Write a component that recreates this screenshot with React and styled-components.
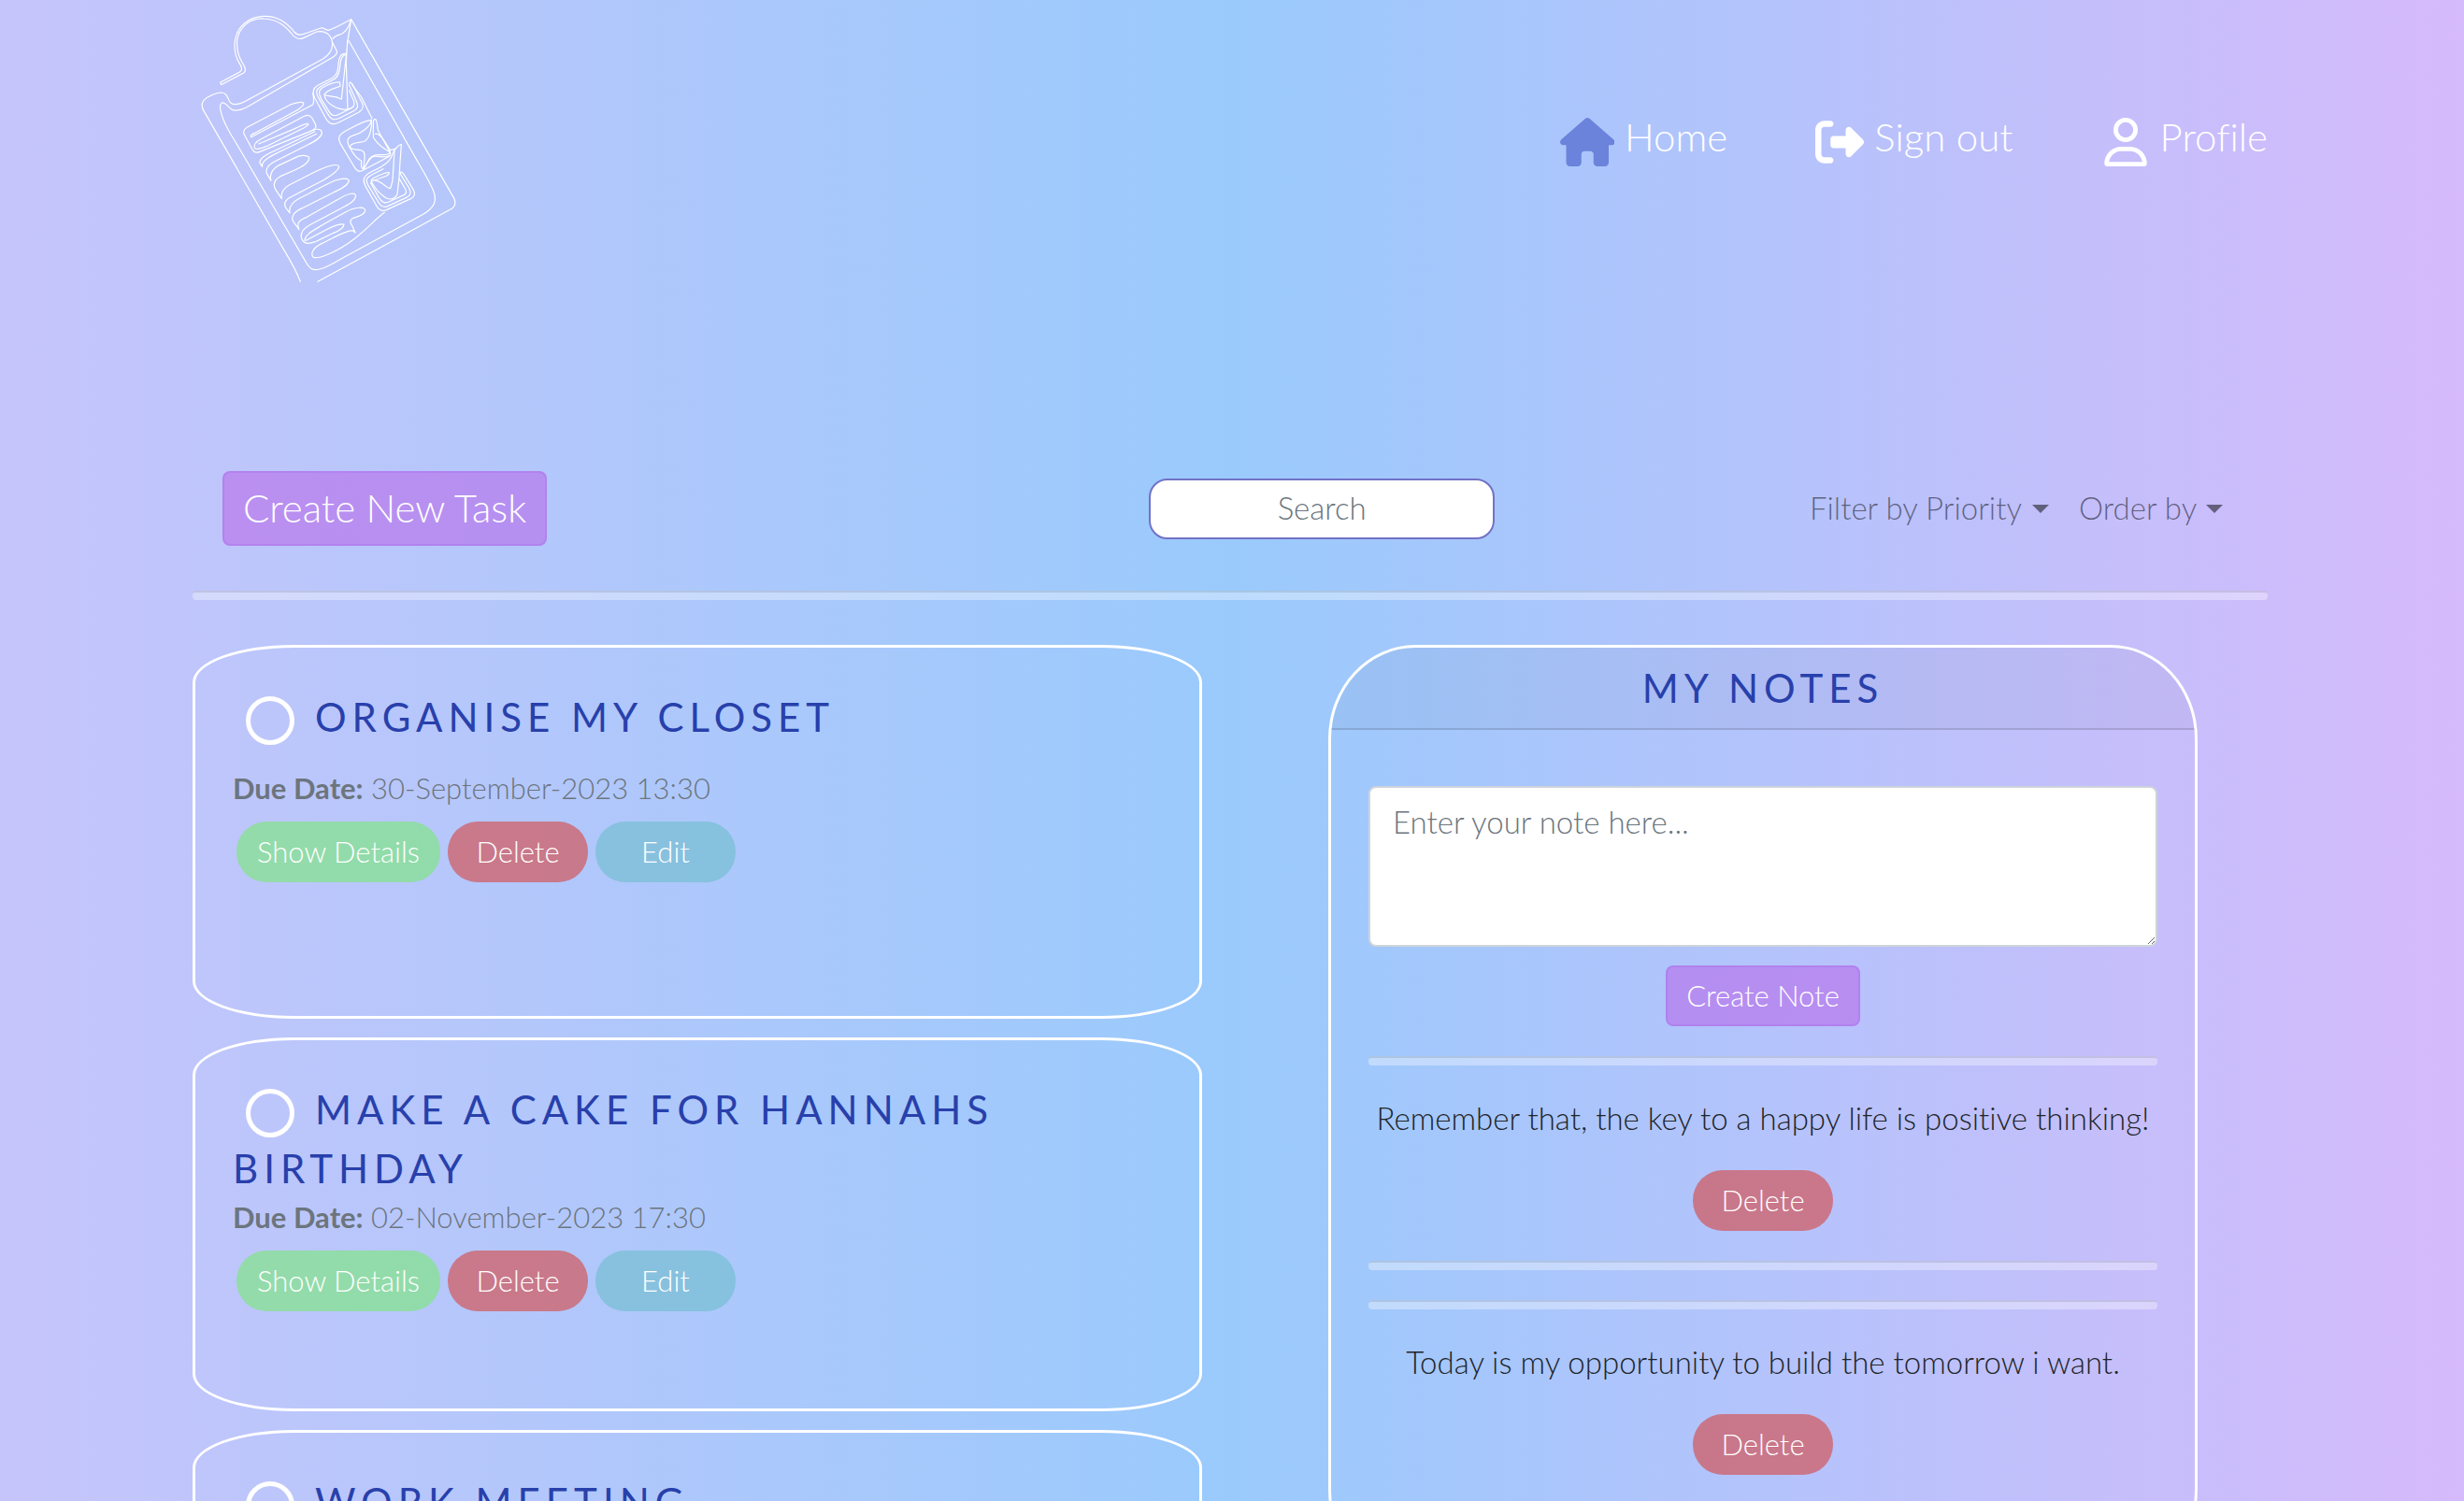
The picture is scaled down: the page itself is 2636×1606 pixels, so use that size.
import React from "react";
import styled, { createGlobalStyle } from "styled-components";
import { FaRightFromBracket, FaRegUser } from "react-icons/fa6";

const GlobalStyle = createGlobalStyle`
  *, *::before, *::after { box-sizing: border-box; }
  html { scrollbar-width: none; }
  body {
    margin: 0;
    padding: 0 4px 0 0;
    min-height: 100vh;
    background: linear-gradient(90deg, #c6c5fb 0%, #9acafc 50%, #d6bafb 100%);
    color: #212529;
    font-family: Lato, "Open Sans", sans-serif;
    font-weight: 300;
    font-size: 33px;
    font-variant-ligatures: none;
  }
  button, input, textarea, select { font: inherit; }
`;

const Page = styled.div`
  max-width: 2220px;
  margin: 0 auto;
`;

const Header = styled.header`
  display: flex;
  justify-content: space-between;
  align-items: flex-start;
  min-height: 504px;
`;

const Logo = styled.svg`
  width: 300px;
  height: 302px;
  fill: none;
  stroke: #fff;
  stroke-width: 3.6;
  stroke-linecap: round;
  stroke-linejoin: round;
`;

const Nav = styled.nav`
  display: flex;
  gap: 94px;
  padding-top: 114px;
`;

const NavLink = styled.a`
  display: flex;
  align-items: center;
  gap: 11px;
  color: #fff;
  font-size: 42px;
  line-height: 48px;
  text-decoration: none;

  svg {
    height: 52px;
    width: auto;
    margin-top: 12px;
    color: ${(p) => (p.$active ? "#6b83db" : "#fff")};
  }
`;

const Toolbar = styled.div`
  display: grid;
  grid-template-columns: 14fr 370px 11fr;
  align-items: center;
  padding: 0 48px 0 32px;
`;

const PurpleButton = styled.button`
  justify-self: start;
  height: ${(p) => (p.$large ? 80 : 65)}px;
  padding: 0 20px 2px;
  border: 2px solid rgba(165, 100, 236, 0.3);
  border-radius: 8px;
  background: rgba(183, 106, 233, 0.6);
  color: #fff;
  font-size: ${(p) => (p.$large ? 42 : 31)}px;
`;

const SearchInput = styled.input`
  width: 100%;
  height: 65px;
  padding: 0 20px 2px;
  border: 2px solid #7272c6;
  border-radius: 20px;
  background: #fff;
  text-align: center;

  &::placeholder { color: #6c757d; opacity: 1; }
`;

const Filters = styled.div`
  display: flex;
  justify-content: flex-end;
  gap: 32px;
`;

const SelectWrap = styled.label`
  display: flex;
  align-items: center;
  gap: 9px;
  color: rgba(0, 0, 0, 0.5);

  &::after {
    content: "";
    border: 9px solid transparent;
    border-top-color: currentColor;
    border-bottom: 0;
  }
`;

const Select = styled.select`
  appearance: none;
  border: 0;
  padding: 0 0 2px;
  background: none;
  color: inherit;
`;

const Rule = styled.hr`
  width: 100%;
  height: 10px;
  margin: 32px 0;
  border: 0;
  border-top: 2px solid rgba(0, 0, 0, 0.1);
  border-radius: 4px;
  background: rgba(255, 255, 255, 0.35);
`;

const HeaderRule = styled(Rule)`
  margin: 48px 0;
`;

const Columns = styled.main`
  display: grid;
  grid-template-columns: 36fr 31fr;
  column-gap: 135px;
  align-items: start;
  padding-right: 75px;
`;

const TaskList = styled.section`
  display: grid;
  gap: 20px;
`;

const TaskCard = styled.article`
  min-height: 400px;
  padding: 43px 40px;
  border: 3px solid #fff;
  border-radius: 10%;
`;

const heading = `
  margin: 0;
  color: #2840ab;
  font-weight: 400;
  font-size: 42px;
  letter-spacing: 6px;
  text-transform: uppercase;
`;

const TaskTitle = styled.h2`
  ${heading}
  min-height: 87px;
  line-height: 63px;
`;

const DoneBox = styled.input`
  appearance: none;
  width: 52px;
  height: 52px;
  margin: 0 22px 0 14px;
  border: 5px solid #fff;
  border-radius: 50%;
  vertical-align: -14px;
`;

const DueDate = styled.p`
  margin: 0 0 16px;
  color: #6c757d;
  font-size: 31px;
  line-height: 40px;

  strong { font-weight: 700; }
`;

const Actions = styled.div`
  display: flex;
  justify-content: ${(p) => (p.$center ? "center" : "flex-start")};
  gap: 8px;
  padding-left: ${(p) => (p.$center ? 0 : 4)}px;
`;

const tones = {
  green: "rgba(120, 233, 116, 0.6)",
  red: "rgba(215, 68, 63, 0.6)",
  blue: "rgba(108, 188, 203, 0.6)",
};

const PillButton = styled.button`
  min-width: ${(p) => (p.$wide ? 218 : 150)}px;
  height: 65px;
  padding: 0 20px 2px;
  border: 0;
  border-radius: 32px;
  background: ${(p) => tones[p.$tone]};
  color: #fff;
  font-size: 31px;
`;

const NotesCard = styled.section`
  border: 3px solid #fff;
  border-radius: 10%;
  overflow: hidden;
`;

const NotesTitle = styled.h2`
  ${heading}
  padding: 12px 0;
  border-bottom: 2px solid rgba(0, 0, 0, 0.125);
  background: rgba(0, 0, 0, 0.03);
  line-height: 62px;
  text-align: center;
`;

const NotesBody = styled.div`
  padding: 60px 40px 40px;
`;

const NoteInput = styled.textarea`
  display: block;
  width: 100%;
  height: 172px;
  padding: 12px 24px;
  border: 2px solid #ced4da;
  border-radius: 8px;
  background: #fff;
  line-height: 48px;
  margin-bottom: 20px;

  &::placeholder { color: #6c757d; opacity: 1; }
`;

const NoteText = styled.p`
  margin: 0 0 32px;
  line-height: 48px;
  text-align: center;
`;

const HouseIcon = () => (
  <svg viewBox="0 0 576 512" fill="currentColor" aria-hidden="true">
    <path d="M575.8 255.5c0 18-15 32.1-32 32.1h-32l.7 160.2c0 2.7-.2 5.4-.5 8.1V472c0 22.1-17.9 40-40 40H456c-1.1 0-2.2 0-3.3-.1c-1.4 .1-2.8 .1-4.2 .1H416 392c-22.1 0-40-17.9-40-40V448 384c0-17.7-14.3-32-32-32H256c-17.7 0-32 14.3-32 32v64 24c0 22.1-17.9 40-40 40H160 128.1c-1.5 0-3-.1-4.5-.2c-1.2 .1-2.4 .2-3.6 .2H104c-22.1 0-40-17.9-40-40V360c0-.9 0-1.9 .1-2.8V287.6H32c-18 0-32-14-32-32.1c0-9 3-17 10-24L266.4 8c7-7 15-8 22-8s15 2 21 7L564.8 231.5c8 7 12 15 11 24z" />
  </svg>
);

const ClipboardLogo = () => (
  <Logo viewBox="48 0 900 906" role="img" aria-label="Task clipboard">
    {/* clip and board outline */}
    <path d="M138 264C137 274 141 272 148 268L212 234C220 228 218 220 214 212C198 186 188 164 191 128C198 88 230 58 276 60C322 62 346 84 366 108C378 124 390 128 404 122L446 102C474 96 492 112 496 134C500 158 486 176 468 188L226 320C190 340 172 340 164 320C158 306 154 298 140 297C124 298 98 308 84 322C76 332 76 342 84 356Q240 625 340 800Q380 866 394 904" />
    <path d="M138 264L198 232C208 226 208 218 200 206C182 176 180 150 185 126C192 84 228 54 276 52C326 50 354 76 374 102C384 114 394 114 408 108L460 90C470 88 474 98 484 97C508 90 532 74 557 62L888 638C894 652 890 662 880 670L450 904" />
    <path d="M496 134L510 162C514 170 508 178 498 184L222 344C202 354 184 358 172 350C160 342 154 328 142 330C132 336 136 352 142 370C152 402 168 428 186 456L410 838C422 862 434 870 456 864C480 858 504 842 530 828L784 690C826 666 834 644 820 610C808 582 790 552 770 518L550 132L546 130" />
    <path d="M557 62C552 80 542 100 528 108C514 114 504 114 498 124M557 62L546 130L541 180L526 318M545 130L541 200L546 352" />
    {/* first tick box */}
    <path d="M538 172C524 170 518 186 516 204C514 232 512 240 494 252L450 274C434 284 432 298 440 314L476 380C486 398 500 402 516 394L582 360C598 350 598 340 590 326L566 280C560 266 550 256 551 274L570 316C582 342 580 348 562 358L522 378C502 388 492 384 482 366L452 314C442 294 446 286 458 278L500 256C518 246 520 226 522 206C524 188 528 178 538 176" />
    <path d="M520 264C500 262 482 272 464 282C450 292 454 304 462 320L486 358C496 374 506 374 520 366L560 346C572 338 568 326 560 312L551 290" />
    <path d="M520 264L522 276C506 284 480 286 471 304C482 312 500 304 526 318M471 306C476 332 510 352 546 352L558 346M434 300C438 318 438 328 434 336L404 352M560 272L590 312L624 380" />
    {/* written lines */}
    <path d="M404 352L236 440C232 436 236 432 246 428L376 358C394 348 408 338 404 330C394 324 378 330 362 336L224 408C210 416 210 424 214 432L240 480C246 490 252 492 262 488L434 418C446 410 446 404 440 394L431 378C425 369 418 368 408 372L268 446C252 454 244 466 247 476C254 482 270 476 284 470L406 410C416 404 422 400 418 397C408 396 392 406 378 412L260 462" />
    <path d="M434 418C448 412 464 414 463 428C460 444 436 456 416 466L312 518C288 530 280 546 288 560L300 580C294 562 302 546 322 532L386 502C404 496 424 500 422 508C420 524 400 534 376 546L330 566C308 578 306 592 314 608L334 638C330 618 338 606 358 594L440 552C470 538 510 522 518 534C518 548 492 564 468 578L368 630C342 642 340 656 348 668L360 684C356 662 370 648 388 638L486 588C512 574 546 568 550 580C546 598 520 608 500 618L400 668C368 682 364 700 372 712L390 737C380 716 390 708 412 698L522 636C544 622 572 614 572 630C568 646 552 654 530 666L424 722C396 738 392 754 400 770C410 786 426 782 442 776L500 748C520 740 534 730 534 720C520 718 500 726 480 736L412 772" />
    <path d="M440 422L320 480C284 496 262 508 264 524L272 535C266 518 300 500 322 490L446 430M408 772C410 750 440 738 468 720L540 680C570 664 602 662 602 676C600 690 580 694 564 700C548 708 556 718 562 728L570 747L562 740C538 740 500 764 462 782C436 794 424 816 436 826C452 832 500 812 546 782C600 746 626 710 664 682" />
    {/* crossed box */}
    <path d="M622 385C600 386 574 402 544 418C520 430 512 442 522 460L566 534C576 552 586 554 600 544L676 504C690 496 680 484 674 474L644 420C640 408 642 394 636 383C628 382 628 386 628 396L628 440C636 456 650 468 668 480L682 488C676 500 664 496 650 497C632 496 622 500 614 512L598 542C590 544 588 534 590 516C572 510 566 494 552 474C540 450 546 440 566 434C590 428 616 408 622 388" />
    <path d="M622 385C624 410 618 440 602 452C588 460 560 454 553 470C556 486 584 476 596 486C606 498 598 520 596 542C612 520 616 504 630 502C646 500 664 508 678 500M634 430C650 426 666 456 682 482L700 478" />
    {/* second tick box */}
    <path d="M718 464C712 462 706 472 698 478L690 494C686 510 674 524 652 536L614 556C596 566 594 580 602 596L638 660C646 674 656 680 670 674L748 638C762 630 764 622 756 608L728 562C720 550 714 548 716 560L744 606C750 620 748 628 734 634L674 662C660 668 652 662 644 648L610 592C602 576 608 570 622 562L660 542" />
    <path d="M718 464L714 520L711 572L705 624C696 640 680 644 664 632C648 620 640 614 630 596C620 584 618 578 628 572C646 562 680 548 679 556C678 566 650 570 634 578M696 482L690 580L683 605C672 604 658 586 640 580C630 576 622 580 620 588L646 634C656 650 664 654 678 648L726 626C738 620 734 610 726 598L712 574" />
  </Logo>
);

const tasks = [
  { title: "Organise my closet", due: "30-September-2023 13:30" },
  { title: "Make a cake for Hannahs Birthday", due: "02-November-2023 17:30" },
  { title: "Work meeting", due: "05-November-2023 09:00" },
];

const notes = [
  "Remember that, the key to a happy life is positive thinking!",
  "Today is my opportunity to build the tomorrow i want.",
];

const Task = ({ title, due }) => (
  <TaskCard>
    <TaskTitle>
      <DoneBox type="checkbox" aria-label={`Complete ${title}`} />
      {title}
    </TaskTitle>
    <DueDate>
      <strong>Due Date:</strong> {due}
    </DueDate>
    <Actions>
      <PillButton $tone="green" $wide>Show Details</PillButton>
      <PillButton $tone="red">Delete</PillButton>
      <PillButton $tone="blue">Edit</PillButton>
    </Actions>
  </TaskCard>
);

const Note = ({ text }) => (
  <div>
    <Rule />
    <NoteText>{text}</NoteText>
    <Actions $center>
      <PillButton $tone="red">Delete</PillButton>
    </Actions>
    <Rule />
  </div>
);

export default function App() {
  return (
    <>
      <GlobalStyle />
      <Page>
        <Header>
          <ClipboardLogo />
          <Nav>
            <NavLink href="#home" $active><HouseIcon />Home</NavLink>
            <NavLink href="#signout"><FaRightFromBracket />Sign out</NavLink>
            <NavLink href="#profile"><FaRegUser />Profile</NavLink>
          </Nav>
        </Header>
        <Toolbar>
          <PurpleButton $large>Create New Task</PurpleButton>
          <SearchInput type="text" placeholder="Search" aria-label="Search" />
          <Filters>
            <SelectWrap>
              <Select aria-label="Filter by Priority"><option>Filter by Priority</option></Select>
            </SelectWrap>
            <SelectWrap>
              <Select aria-label="Order by"><option>Order by</option></Select>
            </SelectWrap>
          </Filters>
        </Toolbar>
        <HeaderRule />
        <Columns>
          <TaskList>
            {tasks.map((task) => <Task key={task.title} {...task} />)}
          </TaskList>
          <NotesCard>
            <NotesTitle>My Notes</NotesTitle>
            <NotesBody>
              <NoteInput placeholder="Enter your note here..." aria-label="Note" />
              <Actions $center>
                <PurpleButton>Create Note</PurpleButton>
              </Actions>
              {notes.map((text) => <Note key={text} text={text} />)}
            </NotesBody>
          </NotesCard>
        </Columns>
      </Page>
    </>
  );
}
